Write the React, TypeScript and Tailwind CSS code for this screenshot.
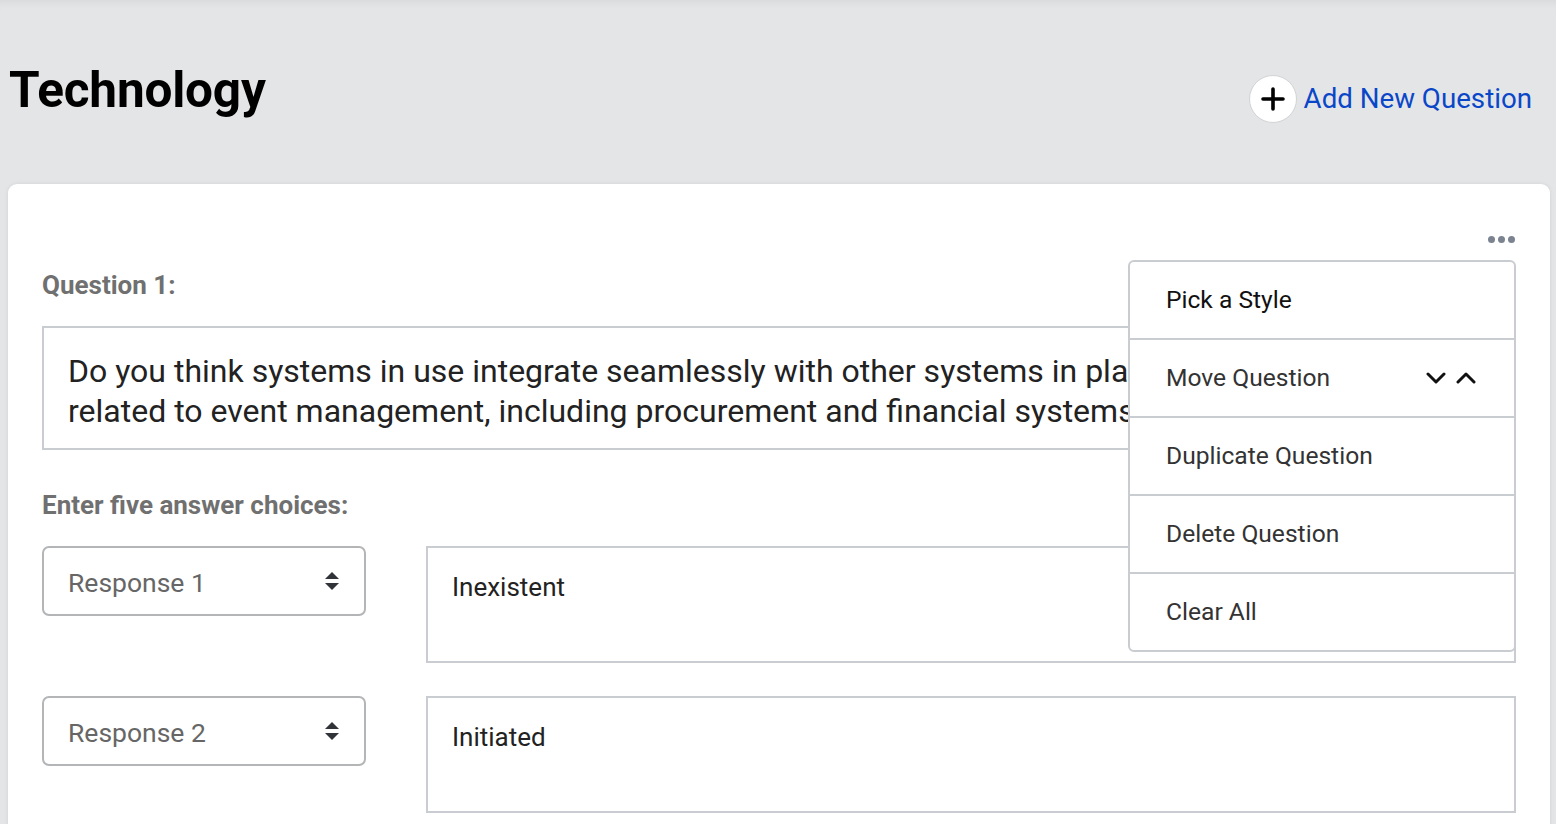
import React from "react";

function SelectArrows() {
  return (
    <svg width="16" height="20" viewBox="0 0 16 20" className="text-[#303338]">
      <path d="M8 1 L15 8 L1 8 Z" fill="currentColor" />
      <path d="M8 19 L15 12 L1 12 Z" fill="currentColor" />
    </svg>
  );
}

function ResponseRow({ label, value, className }: { label: string; value: string; className?: string }) {
  return (
    <div className={"flex items-start gap-[60px] " + (className ?? "")}>
      <div className="w-[324px] h-[70px] shrink-0 rounded-[7px] border-2 border-[#b3b5b7] bg-white flex items-center justify-between pl-[24px] pr-[24px]">
        <span className="pt-[3px] text-[26.5px] leading-[30px] text-[#666666]">{label}</span>
        <SelectArrows />
      </div>
      <div className="flex-1 h-[117px] border-2 border-[#c9cdd1] bg-white pl-[24px] pt-[24px]">
        <span className="text-[26px] leading-[30px] text-[#222222]">{value}</span>
      </div>
    </div>
  );
}

function MenuItem({ children, last, dark }: { children: React.ReactNode; last?: boolean; dark?: boolean }) {
  return (
    <div
      className={
        "flex items-center justify-between pl-[36px] pr-[36px] text-[24.6px] " +
        (dark ? "text-[#111111] " : "text-[#333333] ") +
        (last ? "h-[76px] pt-[1px]" : "h-[78px] border-b-2 border-[#c9cdd1]")
      }
    >
      {children}
    </div>
  );
}

export default function App() {
  return (
    <div
      className="h-screen overflow-hidden bg-[#e4e5e7] shadow-[inset_0_8px_8px_-6px_rgba(0,0,0,0.06)]"
      style={{ fontFamily: "Roboto, 'Noto Sans', sans-serif" }}
    >
      <header className="h-[184px] flex items-start justify-between pl-[9px] pr-[24px]">
        <h1 className="mt-[65px] text-[49.5px] leading-[50px] font-bold text-black tracking-[-0.2px]">Technology</h1>
        <button className="mt-[75px] flex items-center gap-[7px]">
          <span className="w-[48px] h-[48px] rounded-full bg-white border border-[#d2d3d5] flex items-center justify-center">
            <svg width="24" height="24" viewBox="0 0 24 24">
              <path d="M12 2 V22 M2 12 H22" stroke="#000" strokeWidth="3.6" strokeLinecap="round" />
            </svg>
          </span>
          <span className="text-[27.7px] leading-[32px] text-[#0a47c8]">Add New Question</span>
        </button>
      </header>

      <main className="relative ml-[8px] mr-[6px] bg-white rounded-t-[9px] shadow-[0_0_4px_rgba(0,0,0,0.08)] px-[34px] pb-[40px]">
        <div className="flex justify-end pt-[52px] pr-[1px]">
          <div className="flex gap-[3px]">
            <span className="w-[7px] h-[7px] rounded-full bg-[#7b8391]" />
            <span className="w-[7px] h-[7px] rounded-full bg-[#7b8391]" />
            <span className="w-[7px] h-[7px] rounded-full bg-[#7b8391]" />
          </div>
        </div>

        <div className="mt-[27px] text-[26px] leading-[30px] font-bold text-[#707070]">Question 1:</div>

        <div className="mt-[26px] h-[124px] border-2 border-[#c9cdd1] pl-[24px] pt-[23px] text-[32px] leading-[40px] text-[#222222] overflow-hidden whitespace-nowrap">
          Do you think systems in use integrate seamlessly with other systems in place
          <br />
          related to event management, including procurement and financial systems?
        </div>

        <div className="mt-[40px] text-[26px] leading-[30px] font-bold text-[#707070]">Enter five answer choices:</div>

        <ResponseRow className="mt-[26px]" label="Response 1" value="Inexistent" />
        <ResponseRow className="mt-[33px]" label="Response 2" value="Initiated" />

        <div className="absolute top-[76px] right-[34px] w-[388px] bg-white border-2 border-[#c9cdd1] rounded-[6px]">
          <MenuItem dark>Pick a Style</MenuItem>
          <MenuItem>
            <span>Move Question</span>
            <span className="flex items-center gap-[10px] mr-[2px]">
              <svg width="20" height="14" viewBox="0 0 20 14">
                <path d="M2 3 L10 11 L18 3" fill="none" stroke="#111" strokeWidth="3" strokeLinecap="round" strokeLinejoin="round" />
              </svg>
              <svg width="20" height="14" viewBox="0 0 20 14">
                <path d="M2 11 L10 3 L18 11" fill="none" stroke="#111" strokeWidth="3" strokeLinecap="round" strokeLinejoin="round" />
              </svg>
            </span>
          </MenuItem>
          <MenuItem>Duplicate Question</MenuItem>
          <MenuItem>Delete Question</MenuItem>
          <MenuItem last>Clear All</MenuItem>
        </div>
      </main>
    </div>
  );
}
